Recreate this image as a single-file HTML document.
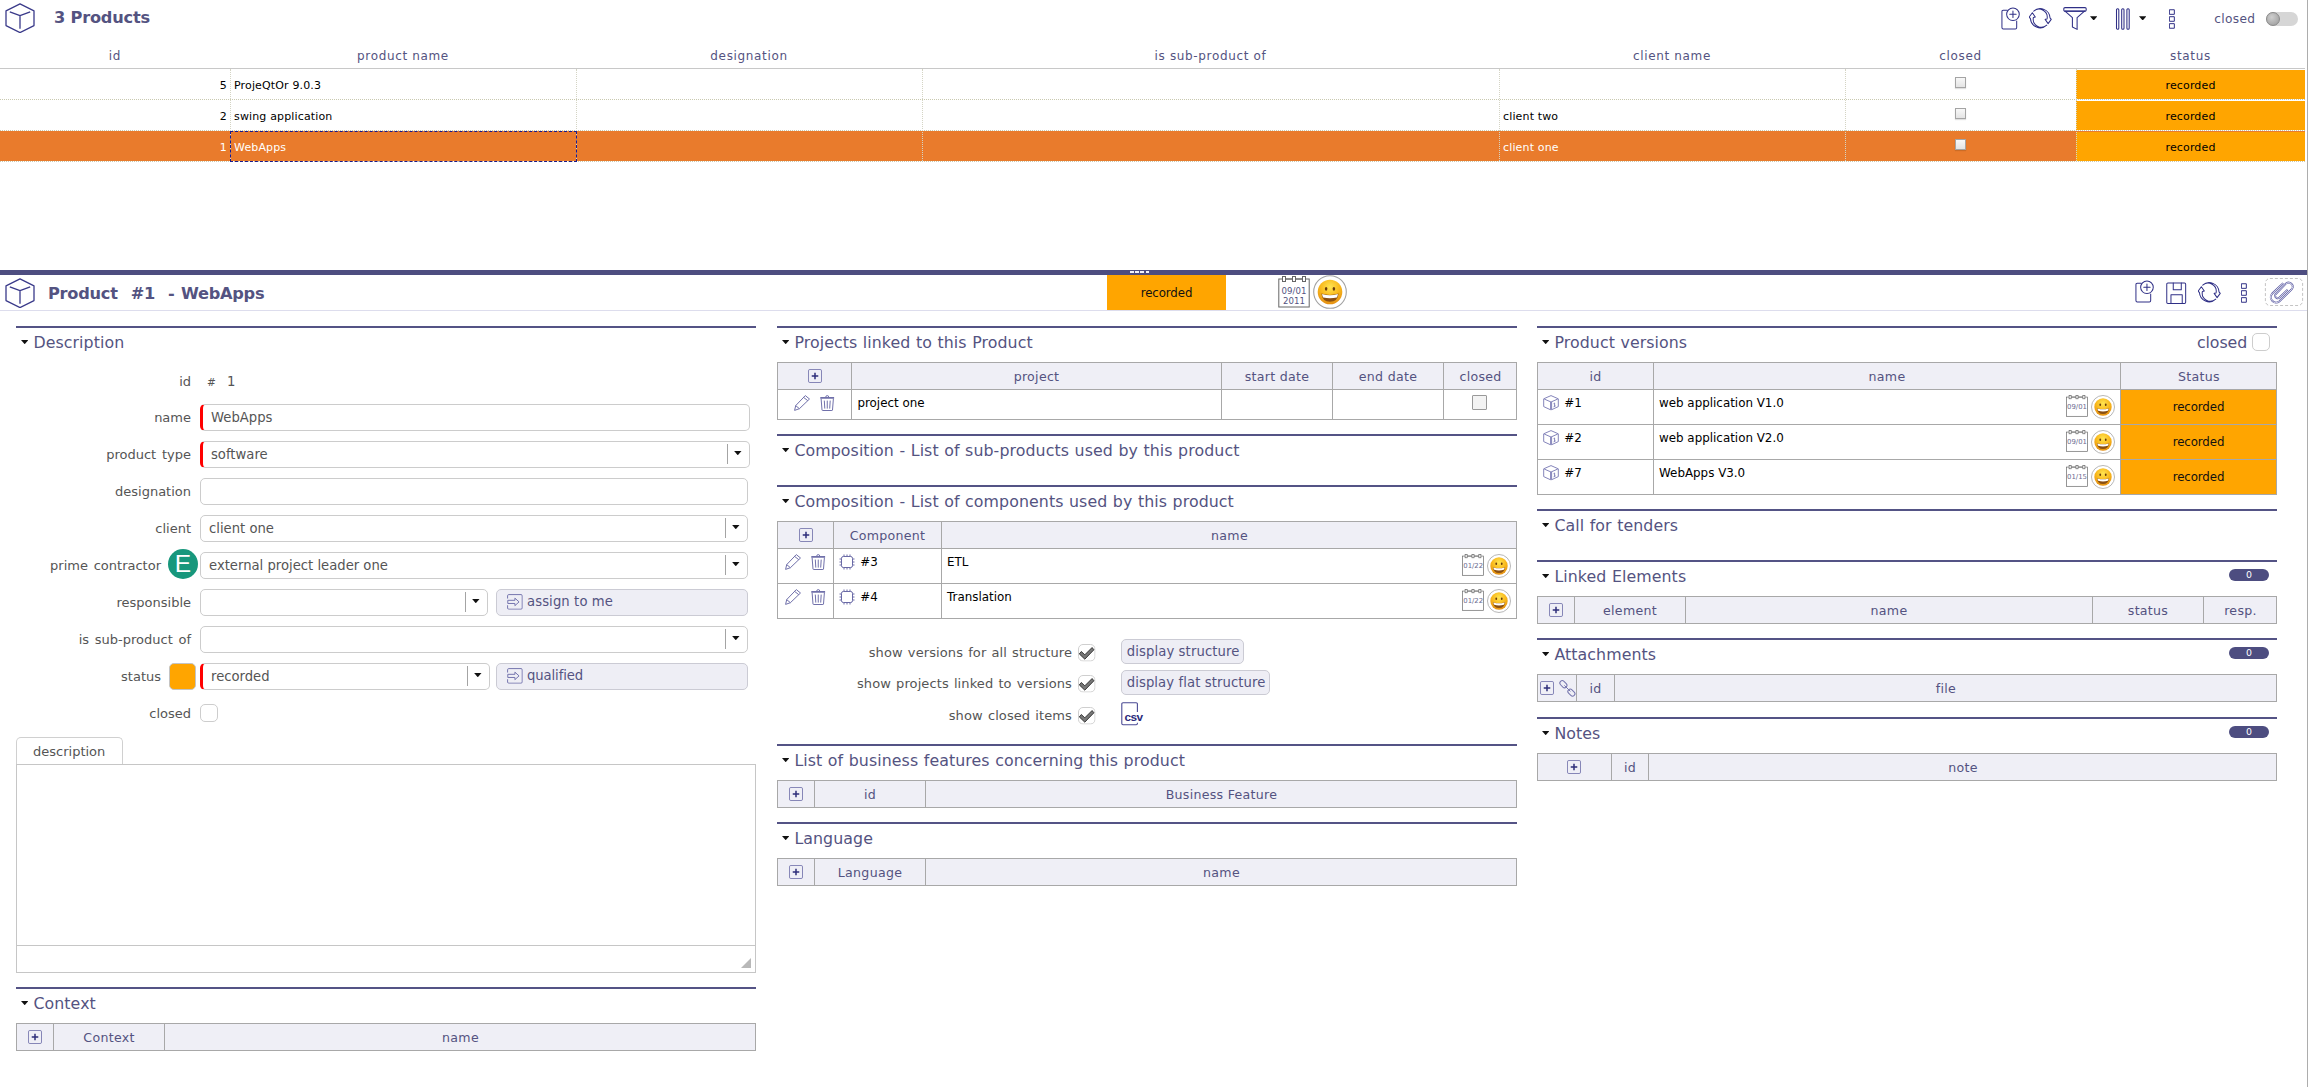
<!DOCTYPE html><html><head><meta charset="utf-8"><title>Products</title><style>
*{box-sizing:border-box;margin:0;padding:0}
html,body{width:2308px;height:1087px;overflow:hidden;background:#fff}
body{position:relative;font-family:"DejaVu Sans","Liberation Sans",sans-serif;font-size:13px;color:#555}
.a{position:absolute;white-space:nowrap}
.t{position:absolute;white-space:nowrap;line-height:1}
.c{text-align:center}
.r{text-align:right}
.gh{color:#545381;font-size:12px;letter-spacing:.65px}
.gc{color:#000;font-size:11px;letter-spacing:.15px}
.sel .gc,.gc.w{color:#fff}
.sec{position:absolute;height:2px;background:#545385}
.st{position:absolute;white-space:nowrap;line-height:1;font-size:15.8px;color:#545381;letter-spacing:.08px;word-spacing:.42px}
.arr{position:absolute;width:7.4px;height:4.2px;background:#111;clip-path:polygon(0 0,100% 0,50% 100%)}
.lb{position:absolute;white-space:nowrap;line-height:1;font-size:13px;color:#555;text-align:right;letter-spacing:0;word-spacing:1.6px}
.in{position:absolute;border:1px solid #ccc;border-radius:5px;background:#fff;height:27px}
.in.req{border-left:3px solid #f00}
.in span{position:absolute;left:8px;top:6px;line-height:1;font-size:13.2px;color:#555;letter-spacing:0}
.in.req span{left:8px}
.in i{position:absolute;right:21px;top:2px;bottom:3px;width:1px;background:#a4a4a4}
.in b{position:absolute;right:7.5px;top:9.1px;width:7.4px;height:4.2px;background:#111;clip-path:polygon(0 0,100% 0,50% 100%)}
.btn{position:absolute;background:#eeeef5;border:1px solid #cbcbd4;border-radius:5px;color:#545381;font-size:13.2px;line-height:1;letter-spacing:.3px}
.tb{position:absolute;border:1px solid #a9a9a9;background:#fff}
.th{position:absolute;background:#efeff6;border-bottom:1px solid #a9a9a9;color:#545381;font-size:12.6px;line-height:1;text-align:center;letter-spacing:.28px}
.vs{position:absolute;width:1px;background:#a9a9a9}
.hs{position:absolute;height:1px;background:#a9a9a9}
.td{position:absolute;white-space:nowrap;line-height:1;font-size:11.9px;color:#000;letter-spacing:0}
.pill{position:absolute;width:40px;height:12px;border-radius:6px;background:#4d4d80;color:#fff;font-size:9.4px;text-align:center;line-height:12.4px}
.cb{position:absolute;border:1px solid #cdcdcd;border-radius:5px;background:#fff}
svg{position:absolute;overflow:visible}
.ic{fill:none;stroke:#2f2f86;stroke-width:1.05;stroke-linejoin:round;stroke-linecap:round}
</style></head><body>
<svg width="0" height="0" style="position:absolute"><defs>
<symbol id="cube" viewBox="0 0 30 30"><g fill="none" stroke="#3a3a8a" stroke-width="1.3" stroke-linejoin="round"><path d="M15 0.8 L29 7.8 V22.6 L15 29.6 L1 22.6 V7.8 Z"/><path d="M4.8 8.8 L15 12.6 L25.2 8.8 M15 12.6 V25.8"/></g></symbol>
<symbol id="plus" viewBox="0 0 15 15"><rect x="0.5" y="0.5" width="14" height="14" rx="1.5" fill="none" stroke="#7a7ab0" stroke-width="1"/><path d="M7.5 4 V11 M4 7.5 H11" stroke="#2e2e7a" stroke-width="1.6" fill="none"/></symbol>
<symbol id="new" viewBox="0 0 20 24"><g class="ic"><path d="M6.5 3.5 H2.2 Q0.8 3.5 0.8 5 V21.5 Q0.8 23 2.2 23 H14.8 Q16.2 23 16.2 21.5 V14.5"/><circle cx="12.3" cy="7.6" r="6.6"/><path d="M12.3 4.3 V10.9 M9 7.6 H15.6"/></g></symbol>
<symbol id="refresh" viewBox="0 0 24 22"><g class="ic" stroke-width="1"><path d="M4.6 3.4 A10.2 10.2 0 0 1 21.7 10.3 L23 11.9 L19.7 16.4 L16.6 11.9 L18.6 11.5 A8.53 8.53 0 0 0 4.6 3.4 Z"/><path d="M4.6 3.4 A10.2 10.2 0 0 1 21.7 10.3 L23 11.9 L19.7 16.4 L16.6 11.9 L18.6 11.5 A8.53 8.53 0 0 0 4.6 3.4 Z" transform="rotate(180 11.45 10.7)"/></g></symbol>
<symbol id="save" viewBox="0 0 22 23"><g class="ic"><path d="M2 0.8 H19.4 Q20.6 0.8 20.6 2 V21 Q20.6 22.2 19.4 22.2 H2 Q0.8 22.2 0.8 21 V2 Q0.8 0.8 2 0.8 Z"/><path d="M7.6 0.8 V7.8 H16 V0.8"/><path d="M5.2 22.2 V13.2 H17 V22.2"/></g></symbol>
<symbol id="dots" viewBox="0 0 7 21"><g class="ic"><rect x="0.8" y="0.8" width="4.8" height="4.8"/><rect x="0.8" y="8.1" width="4.8" height="4.8"/><rect x="0.8" y="15.4" width="4.8" height="4.8"/></g></symbol>
<symbol id="pencil" viewBox="0 0 16 16"><g fill="none" stroke="#7070aa" stroke-width="1" stroke-linejoin="round"><path d="M0.6 15.4 L1.7 10.6 L11.3 0.6 L15.5 4 L5.4 13.7 Z"/><path d="M1.7 10.6 L5.4 13.7 M9.6 2.4 L13.8 5.7"/></g></symbol>
<symbol id="trash" viewBox="0 0 14.5 16"><g fill="none" stroke="#7070aa" stroke-width="1" stroke-linejoin="round"><path d="M0.3 2.9 H14.2" stroke-width="1.7"/><path d="M5.8 2 Q5.8 0.6 7.2 0.6 Q8.7 0.6 8.7 2"/><path d="M1.1 3.6 L2 15 Q2.05 15.5 2.6 15.5 H11.9 Q12.45 15.5 12.5 15 L13.4 3.6"/><path d="M4.3 5.6 L4.8 13.6 M7.25 5.6 V13.6 M10.2 5.6 L9.7 13.6"/></g></symbol>
<symbol id="cal" viewBox="0 0 32 32"><g fill="#fff" stroke="#666" stroke-width="1"><rect x="0.8" y="3" width="30.4" height="28" /><rect x="4.5" y="0.5" width="3" height="5"/><rect x="14.5" y="0.5" width="3" height="5"/><rect x="24.5" y="0.5" width="3" height="5"/></g><path d="M7.5 3 H14.5 M17.5 3 H24.5" stroke="#666" stroke-width="1"/></symbol>
<symbol id="smile" viewBox="0 0 34 34"><defs><radialGradient id="sg" cx="50%" cy="30%" r="70%"><stop offset="0" stop-color="#ffe552"/><stop offset="0.55" stop-color="#f9b91c"/><stop offset="1" stop-color="#e48f12"/></radialGradient></defs><circle cx="17" cy="17" r="16.3" fill="#fff" stroke="#a2a2a2" stroke-width="1.1"/><circle cx="17" cy="17" r="12.3" fill="url(#sg)"/><ellipse cx="13.1" cy="13.8" rx="1.25" ry="1.9" fill="#6a3c0c"/><ellipse cx="20.9" cy="13.8" rx="1.25" ry="1.9" fill="#6a3c0c"/><path d="M8.4 18.6 Q17 21.4 25.6 18.6 Q24.8 26.8 17 26.8 Q9.2 26.8 8.4 18.6 Z" fill="#8a4f12"/><path d="M9.1 19 Q17 21.6 24.9 19 Q24.7 21.4 23.8 22.4 Q17 24 10.2 22.4 Q9.3 21.4 9.1 19 Z" fill="#fff"/></symbol>
<symbol id="chk" viewBox="0 0 17.5 17.5"><rect x="0.5" y="0.5" width="16.5" height="16.5" rx="4.5" fill="#fff" stroke="#cfcfcf"/><path d="M1.3 9.9 L3.3 7.5 L6.8 10.8 L14.1 3.5 L15.9 5.8 L6.8 15.2 Z" fill="#777" stroke="#2e2e2e" stroke-width="0.9" stroke-linejoin="round"/></symbol>
<symbol id="comp" viewBox="0 0 16 16"><g fill="none" stroke="#6a6aa6" stroke-width="1"><rect x="2.5" y="2.5" width="11" height="11" rx="1.8"/><path d="M5 0.5 V2.5 M8 0.5 V2.5 M11 0.5 V2.5 M5 13.5 V15.5 M8 13.5 V15.5 M11 13.5 V15.5 M0.5 5 H2.5 M0.5 8 H2.5 M0.5 11 H2.5 M13.5 5 H15.5 M13.5 8 H15.5 M13.5 11 H15.5"/></g></symbol>
<symbol id="pv" viewBox="0 0 16 15.5"><g fill="none" stroke="#8484ba" stroke-width="1" stroke-linejoin="round"><path d="M8 0.6 L15.3 3.8 V11.6 L8 15 L0.7 11.6 V3.8 Z"/><path d="M1.2 4 L8 7 L14.8 4 M7.6 7 V14.6 M8.6 7 V14.6"/><path d="M10.6 8.6 L11.6 8 V11.4 M10.6 11.8 L12.6 10.9"/></g></symbol>
<symbol id="goto" viewBox="0 0 16 16"><g fill="none" stroke="#7474ae" stroke-width="1" stroke-linejoin="round"><path d="M0.6 4.6 V1.8 Q0.6 0.6 1.8 0.6 H14.2 Q15.4 0.6 15.4 1.8 V14.2 Q15.4 15.4 14.2 15.4 H1.8 Q0.6 15.4 0.6 14.2 V11.4"/><path d="M0.8 6.4 H8 V4.2 L12.2 8 L8 11.8 V9.6 H0.8 Z"/></g></symbol>
</defs></svg>
<svg style="left:5px;top:3px" width="30" height="30"><use href="#cube" width="30" height="30"/></svg>
<div class="t" style="left:54px;top:10px;font-size:16.2px;font-weight:bold;color:#545381;letter-spacing:-.2px">3 Products</div>
<svg style="left:2000.5px;top:6.5px" width="19.5" height="23"><use href="#new" width="19.5" height="23"/></svg>
<svg style="left:2029px;top:7.5px" width="23.5" height="21"><use href="#refresh" width="23.5" height="21"/></svg>
<svg style="left:2062.5px;top:7px" width="24" height="24" viewBox="0 0 24 24"><g class="ic"><rect x="0.8" y="0.6" width="22.4" height="3.7" rx="1.2"/><path d="M2 4.1 H22" stroke-width="1.3"/><path d="M2.3 4.4 L9.4 10.6 V20 L14.1 22.4 V10.6 L21.5 4.2"/></g></svg>
<div class="arr" style="left:2090px;top:16.2px"></div>
<svg style="left:2116px;top:8px" width="15" height="22" viewBox="0 0 15 22"><g class="ic" stroke-width="0.9"><rect x="0.5" y="0.8" width="2.3" height="20.4" rx="1"/><rect x="5.7" y="0.8" width="2.3" height="20.4" rx="1"/><rect x="10.9" y="0.8" width="2.3" height="20.4" rx="1"/></g></svg>
<div class="arr" style="left:2139px;top:16.2px"></div>
<svg style="left:2168.5px;top:9px" width="6.67" height="20"><use href="#dots" width="6.67" height="20"/></svg>
<div class="t" style="left:2214.3px;top:12.6px;font-size:12.2px;color:#545381;letter-spacing:.3px">closed</div>
<div class="a" style="left:2266px;top:12px;width:32px;height:14px;border-radius:7px;background:#d6d6d6"></div>
<div class="a" style="left:2266px;top:12px;width:14px;height:14px;border-radius:7px;background:radial-gradient(circle at 40% 35%,#cfcfcf,#999);border:1px solid #8a8a8a"></div>
<div class="t gh c" style="left:0px;top:50px;width:230px;">id</div>
<div class="t gh c" style="left:230px;top:50px;width:346px;">product name</div>
<div class="t gh c" style="left:576px;top:50px;width:346px;">designation</div>
<div class="t gh c" style="left:922px;top:50px;width:577px;">is sub-product of</div>
<div class="t gh c" style="left:1499px;top:50px;width:346px;">client name</div>
<div class="t gh c" style="left:1845px;top:50px;width:231px;">closed</div>
<div class="t gh c" style="left:2076px;top:50px;width:229px;">status</div>
<div class="a" style="left:0;top:68px;width:2305px;height:1px;background:#c8c8c8"></div>
<div class="t gc r" style="left:0px;top:79.5px;width:227px;">5</div>
<div class="t gc" style="left:234px;top:79.5px;">ProjeQtOr 9.0.3</div>
<div class="a" style="left:0;top:99px;width:2305px;height:0;border-top:1px dotted #c9c9b0"></div>
<div class="a" style="left:1955px;top:77px;width:11px;height:11px;border:1px solid #a4a4a4;background:linear-gradient(#f8f8f8,#e4e4e4);box-shadow:0 1px 1px rgba(0,0,0,.12)"></div>
<div class="a" style="left:2076px;top:70px;width:229.3px;height:28.7px;background:#ffa500"></div>
<div class="t gc c" style="left:2076px;top:79.5px;width:229px;">recorded</div>
<div class="t gc r" style="left:0px;top:110.5px;width:227px;">2</div>
<div class="t gc" style="left:234px;top:110.5px;">swing application</div>
<div class="t gc" style="left:1503px;top:110.5px;">client two</div>
<div class="a" style="left:0;top:130px;width:2305px;height:0;border-top:1px dotted #c9c9b0"></div>
<div class="a" style="left:1955px;top:108px;width:11px;height:11px;border:1px solid #a4a4a4;background:linear-gradient(#f8f8f8,#e4e4e4);box-shadow:0 1px 1px rgba(0,0,0,.12)"></div>
<div class="a" style="left:2076px;top:101px;width:229.3px;height:28.7px;background:#ffa500"></div>
<div class="t gc c" style="left:2076px;top:110.5px;width:229px;">recorded</div>
<div class="a" style="left:0;top:130.7px;width:2305.3px;height:30.6px;background:#e97b2c"></div>
<div class="t gc r w" style="left:0px;top:141.5px;width:227px;">1</div>
<div class="t gc w" style="left:234px;top:141.5px;">WebApps</div>
<div class="t gc w" style="left:1503px;top:141.5px;">client one</div>
<div class="a" style="left:0;top:161px;width:2305px;height:0;border-top:1px dotted #c9c9b0"></div>
<div class="a" style="left:1955px;top:139px;width:11px;height:11px;border:1px solid #a4a4a4;background:linear-gradient(#f8f8f8,#e4e4e4);box-shadow:0 1px 1px rgba(0,0,0,.12)"></div>
<div class="a" style="left:2076px;top:132px;width:229.3px;height:28.7px;background:#ffa500"></div>
<div class="t gc c" style="left:2076px;top:141.5px;width:229px;">recorded</div>
<div class="a" style="left:230px;top:69px;width:0;height:92px;border-left:1px dotted #d4d4c4"></div>
<div class="a" style="left:576px;top:69px;width:0;height:92px;border-left:1px dotted #d4d4c4"></div>
<div class="a" style="left:922px;top:69px;width:0;height:92px;border-left:1px dotted #d4d4c4"></div>
<div class="a" style="left:1499px;top:69px;width:0;height:92px;border-left:1px dotted #d4d4c4"></div>
<div class="a" style="left:1845px;top:69px;width:0;height:92px;border-left:1px dotted #d4d4c4"></div>
<div class="a" style="left:2076px;top:69px;width:0;height:92px;border-left:1px dotted #d4d4c4"></div>
<div class="a" style="left:230px;top:131px;width:347px;height:30.5px;border:1px dashed #1a1a8c"></div>
<div class="a" style="left:2306.7px;top:0;width:1.3px;height:1087px;background:#adadad"></div>
<div class="a" style="left:0;top:270px;width:2306.8px;height:5px;background:#4d4d80"></div>
<div class="a" style="left:1130px;top:271.2px;width:20px;height:1.7px;background:repeating-linear-gradient(90deg,#f4f4fa 0 3.8px,#4d4d80 3.8px 5.2px)"></div>
<div class="a" style="left:0;top:310px;width:2306.8px;height:1px;background:#dddded"></div>
<svg style="left:5px;top:278px" width="30" height="30"><use href="#cube" width="30" height="30"/></svg>
<div class="t" style="left:48px;top:286px;font-size:16.2px;font-weight:bold;color:#545381;letter-spacing:-.25px;word-spacing:1.1px">Product&nbsp; #1&nbsp; - WebApps</div>
<div class="a" style="left:1107px;top:275px;width:119px;height:35px;background:#ffa500"></div>
<div class="t c" style="left:1107px;top:288px;width:119px;font-size:11.8px;color:#111;letter-spacing:-.1px">recorded</div>
<svg style="left:1278px;top:275.5px" width="32" height="32"><use href="#cal" width="32" height="32"/></svg>
<div class="t c" style="left:1278px;top:286.5px;width:32px;font-size:8.6px;color:#545381">09/01</div>
<div class="t c" style="left:1278px;top:296.5px;width:32px;font-size:8.6px;color:#545381">2011</div>
<svg style="left:1313.2px;top:274.6px" width="34" height="34"><use href="#smile" width="34" height="34"/></svg>
<svg style="left:2134.5px;top:280px" width="19.5" height="23"><use href="#new" width="19.5" height="23"/></svg>
<svg style="left:2165.7px;top:281.6px" width="21" height="22.4"><use href="#save" width="21" height="22.4"/></svg>
<svg style="left:2198px;top:281.5px" width="23.5" height="21"><use href="#refresh" width="23.5" height="21"/></svg>
<svg style="left:2240.5px;top:283px" width="6.67" height="20"><use href="#dots" width="6.67" height="20"/></svg>
<svg style="left:2262px;top:274px" width="44" height="36" viewBox="0 0 44 36"><rect x="3.4" y="4.5" width="37.2" height="27" rx="4.5" fill="none" stroke="#bdbdbd" stroke-width="0.9" stroke-dasharray="3 2"/><path d="M21.2 9.1 L10.26 19.54 A5.3 5.3 0 0 0 17.22 27.48 L29.8 15.23 A4.12 4.12 0 0 0 23.84 9.6 L13.25 20.53 A2.7 2.7 0 0 0 17.88 23.18 L25.66 15.56" fill="none" stroke="#5656a0" stroke-width="1.9"/><path d="M21.2 9.1 L10.26 19.54 A5.3 5.3 0 0 0 17.22 27.48 L29.8 15.23 A4.12 4.12 0 0 0 23.84 9.6 L13.25 20.53 A2.7 2.7 0 0 0 17.88 23.18 L25.66 15.56" fill="none" stroke="#fff" stroke-width="0.8"/></svg>
<div class="sec" style="left:16px;top:326px;width:740px"></div>
<div class="arr" style="left:21px;top:340px"></div>
<div class="st" style="left:33.4px;top:334.8px;">Description</div>
<div class="lb" style="left:0px;top:374.5px;width:191px;">id</div>
<div class="t" style="left:207px;top:376.5px;font-size:10.5px;color:#555">#</div>
<div class="t" style="left:227px;top:374.5px;font-size:13.2px;color:#555">1</div>
<div class="lb" style="left:0px;top:411px;width:191px;">name</div>
<div class="in req" style="left:200px;top:404px;width:550px"><span>WebApps</span></div>
<div class="lb" style="left:0px;top:448px;width:191px;">product type</div>
<div class="in req" style="left:200px;top:441px;width:550px"><span>software</span><i></i><b></b></div>
<div class="lb" style="left:0px;top:485px;width:191px;">designation</div>
<div class="in" style="left:200px;top:478px;width:548px"></div>
<div class="lb" style="left:0px;top:522px;width:191px;">client</div>
<div class="in" style="left:200px;top:515px;width:548px"><span>client one</span><i></i><b></b></div>
<div class="lb" style="left:0px;top:559px;width:161px;">prime contractor</div>
<div class="in" style="left:200px;top:552px;width:548px"><span>external project leader one</span><i></i><b></b></div>
<div class="a" style="left:168px;top:549px;width:30px;height:30px;border-radius:15px;background:#17977c;color:#fff;font-size:24.5px;line-height:30px;text-align:center;font-family:'Liberation Sans',sans-serif">E</div>
<div class="lb" style="left:0px;top:596px;width:191px;">responsible</div>
<div class="in" style="left:200px;top:589px;width:288px"><i></i><b></b></div>
<div class="btn" style="left:496px;top:589px;width:252px;height:27px"></div>
<svg style="left:507px;top:594px" width="15.8" height="15.8"><use href="#goto" width="15.8" height="15.8"/></svg>
<div class="t" style="left:527px;top:595px;font-size:13.2px;color:#545381;letter-spacing:.1px">assign to me</div>
<div class="lb" style="left:0px;top:633px;width:191px;">is sub-product of</div>
<div class="in" style="left:200px;top:626px;width:548px"><i></i><b></b></div>
<div class="lb" style="left:0px;top:670px;width:161px;">status</div>
<div class="a" style="left:169px;top:663px;width:27px;height:27px;border-radius:5px;background:#ffa500;border:1px solid #c4c4c4"></div>
<div class="in req" style="left:200px;top:663px;width:290px"><span>recorded</span><i></i><b></b></div>
<div class="btn" style="left:496px;top:663px;width:252px;height:27px"></div>
<svg style="left:507px;top:668px" width="15.8" height="15.8"><use href="#goto" width="15.8" height="15.8"/></svg>
<div class="t" style="left:527px;top:669px;font-size:13.2px;color:#545381;letter-spacing:-.1px">qualified</div>
<div class="lb" style="left:0px;top:707px;width:191px;">closed</div>
<div class="cb" style="left:200px;top:703.8px;width:18px;height:18px"></div>
<div class="a" style="left:16px;top:737px;width:107px;height:28px;border:1px solid #d0d0d0;border-bottom:0;border-radius:5px 5px 0 0;background:#fff"></div>
<div class="a" style="left:16px;top:764px;width:740px;height:209px;border:1px solid #c6c6c6;background:#fff"></div>
<div class="a" style="left:16px;top:945px;width:740px;height:1px;background:#c6c6c6"></div>
<div class="t" style="left:33px;top:744.8px;font-size:13px;color:#555;letter-spacing:0">description</div>
<div class="a" style="left:741px;top:958px;width:0;height:0;border-left:10px solid transparent;border-bottom:10px solid #b8b8b8"></div>
<div class="sec" style="left:16px;top:987px;width:740px"></div>
<div class="arr" style="left:21px;top:1001px"></div>
<div class="st" style="left:33.4px;top:995.8px;">Context</div>
<div class="a" style="left:16px;top:1023px;width:740px;height:28px;background:#fff"></div>
<div class="a" style="left:16px;top:1023px;width:740px;height:28px;background:#efeff6"></div>
<div class="t th" style="left:53px;top:1031.6px;width:112px;background:none;border:0">Context</div>
<div class="t th" style="left:164px;top:1031.6px;width:593px;background:none;border:0">name</div>
<div class="a" style="left:16px;top:1023px;width:740px;height:28px;border:1px solid #a8a8a8"></div>
<div class="vs" style="left:53px;top:1023px;height:28px;background:#a8a8a8"></div>
<div class="vs" style="left:164px;top:1023px;height:28px;background:#a8a8a8"></div>
<svg style="left:28px;top:1030px" width="14" height="14"><use href="#plus" width="14" height="14"/></svg>
<div class="sec" style="left:777px;top:326px;width:740px"></div>
<div class="arr" style="left:782px;top:340px"></div>
<div class="st" style="left:794.4px;top:334.8px;">Projects linked to this Product</div>
<div class="a" style="left:777px;top:362px;width:740px;height:58px;background:#fff"></div>
<div class="a" style="left:777px;top:362px;width:740px;height:28px;background:#efeff6"></div>
<div class="t th" style="left:851px;top:370.6px;width:371px;background:none;border:0">project</div>
<div class="t th" style="left:1221px;top:370.6px;width:112px;background:none;border:0">start date</div>
<div class="t th" style="left:1332px;top:370.6px;width:112px;background:none;border:0">end date</div>
<div class="t th" style="left:1443px;top:370.6px;width:75px;background:none;border:0">closed</div>
<div class="a" style="left:777px;top:362px;width:740px;height:58px;border:1px solid #a8a8a8"></div>
<div class="vs" style="left:851px;top:362px;height:58px;background:#a8a8a8"></div>
<div class="vs" style="left:1221px;top:362px;height:58px;background:#a8a8a8"></div>
<div class="vs" style="left:1332px;top:362px;height:58px;background:#a8a8a8"></div>
<div class="vs" style="left:1443px;top:362px;height:58px;background:#a8a8a8"></div>
<div class="hs" style="left:777px;top:389px;width:740px;background:#a8a8a8"></div>
<svg style="left:808px;top:369px" width="14" height="14"><use href="#plus" width="14" height="14"/></svg>
<svg style="left:794px;top:395px" width="16" height="16"><use href="#pencil" width="16" height="16"/></svg>
<svg style="left:820px;top:395px" width="14.5" height="16"><use href="#trash" width="14.5" height="16"/></svg>
<div class="td" style="left:857.4px;top:398px;">project one</div>
<div class="a" style="left:1472px;top:395px;width:15px;height:15px;border:1px solid #999;background:#f3f3f3;border-radius:1px"></div>
<div class="sec" style="left:777px;top:434px;width:740px"></div>
<div class="arr" style="left:782px;top:448px"></div>
<div class="st" style="left:794.4px;top:442.8px;">Composition - List of sub-products used by this product</div>
<div class="sec" style="left:777px;top:485px;width:740px"></div>
<div class="arr" style="left:782px;top:499px"></div>
<div class="st" style="left:794.4px;top:493.8px;">Composition - List of components used by this product</div>
<div class="a" style="left:777px;top:521px;width:740px;height:98px;background:#fff"></div>
<div class="a" style="left:777px;top:521px;width:740px;height:28px;background:#efeff6"></div>
<div class="t th" style="left:833px;top:529.6px;width:109px;background:none;border:0">Component</div>
<div class="t th" style="left:941px;top:529.6px;width:577px;background:none;border:0">name</div>
<div class="a" style="left:777px;top:521px;width:740px;height:98px;border:1px solid #a8a8a8"></div>
<div class="vs" style="left:833px;top:521px;height:98px;background:#a8a8a8"></div>
<div class="vs" style="left:941px;top:521px;height:98px;background:#a8a8a8"></div>
<div class="hs" style="left:777px;top:548px;width:740px;background:#a8a8a8"></div>
<div class="hs" style="left:777px;top:583px;width:740px;background:#a8a8a8"></div>
<svg style="left:799px;top:528px" width="14" height="14"><use href="#plus" width="14" height="14"/></svg>
<svg style="left:785.2px;top:554px" width="16" height="16"><use href="#pencil" width="16" height="16"/></svg>
<svg style="left:811.1px;top:553.8px" width="14.5" height="16"><use href="#trash" width="14.5" height="16"/></svg>
<svg style="left:839px;top:554px" width="16" height="16"><use href="#comp" width="16" height="16"/></svg>
<div class="td" style="left:860.2px;top:556.8px;">#3</div>
<div class="td" style="left:947px;top:556.8px;">ETL</div>
<svg style="left:1462.2px;top:554.1px" width="22" height="22"><use href="#cal" width="22" height="22"/></svg>
<div class="t c" style="left:1462.2px;top:563.3px;width:22px;font-size:6.9px;color:#6c6c90">01/22</div>
<svg style="left:1487.2px;top:553.9px" width="24" height="24"><use href="#smile" width="24" height="24"/></svg>
<svg style="left:785.2px;top:589px" width="16" height="16"><use href="#pencil" width="16" height="16"/></svg>
<svg style="left:811.1px;top:588.8px" width="14.5" height="16"><use href="#trash" width="14.5" height="16"/></svg>
<svg style="left:839px;top:589px" width="16" height="16"><use href="#comp" width="16" height="16"/></svg>
<div class="td" style="left:860.2px;top:591.8px;">#4</div>
<div class="td" style="left:947px;top:591.8px;">Translation</div>
<svg style="left:1462.2px;top:589.1px" width="22" height="22"><use href="#cal" width="22" height="22"/></svg>
<div class="t c" style="left:1462.2px;top:598.3px;width:22px;font-size:6.9px;color:#6c6c90">01/22</div>
<svg style="left:1487.2px;top:588.9px" width="24" height="24"><use href="#smile" width="24" height="24"/></svg>
<div class="lb" style="left:700px;top:646.4px;width:372px;letter-spacing:.1px;word-spacing:.9px">show versions for all structure</div>
<svg style="left:1078px;top:644px" width="17.5" height="17.5"><use href="#chk" width="17.5" height="17.5"/></svg>
<div class="lb" style="left:700px;top:677.4px;width:372px;letter-spacing:.1px;word-spacing:.9px">show projects linked to versions</div>
<svg style="left:1078px;top:675px" width="17.5" height="17.5"><use href="#chk" width="17.5" height="17.5"/></svg>
<div class="lb" style="left:700px;top:709.4px;width:372px;letter-spacing:.1px;word-spacing:.9px">show closed items</div>
<svg style="left:1078px;top:707px" width="17.5" height="17.5"><use href="#chk" width="17.5" height="17.5"/></svg>
<div class="btn" style="left:1121px;top:638.5px;width:123px;height:25px"></div>
<div class="t c" style="left:1121.6px;top:645.3px;width:123px;font-size:13.2px;color:#545381;letter-spacing:.12px">display structure</div>
<div class="btn" style="left:1121px;top:669.5px;width:149px;height:25px"></div>
<div class="t c" style="left:1121.6px;top:676.3px;width:149px;font-size:13.2px;color:#545381;letter-spacing:.1px">display flat structure</div>
<svg style="left:1121px;top:702px" width="23" height="24" viewBox="0 0 23 24"><path d="M16.4 10 V2 Q16.4 0.8 15.2 0.8 H2 Q0.8 0.8 0.8 2 V21.6 Q0.8 22.8 2 22.8 H15.2 Q16.4 22.8 16.4 21.6 V20.8" fill="none" stroke="#4a4a94" stroke-width="1.1"/><text x="3.6" y="19.3" font-family="Liberation Sans,sans-serif" font-size="11.8" font-weight="bold" fill="#2a2a7c" letter-spacing="-.6">csv</text></svg>
<div class="sec" style="left:777px;top:744px;width:740px"></div>
<div class="arr" style="left:782px;top:758px"></div>
<div class="st" style="left:794.4px;top:752.8px;">List of business features concerning this product</div>
<div class="a" style="left:777px;top:780px;width:740px;height:28px;background:#fff"></div>
<div class="a" style="left:777px;top:780px;width:740px;height:28px;background:#efeff6"></div>
<div class="t th" style="left:814px;top:788.6px;width:112px;background:none;border:0">id</div>
<div class="t th" style="left:925px;top:788.6px;width:593px;background:none;border:0">Business Feature</div>
<div class="a" style="left:777px;top:780px;width:740px;height:28px;border:1px solid #a8a8a8"></div>
<div class="vs" style="left:814px;top:780px;height:28px;background:#a8a8a8"></div>
<div class="vs" style="left:925px;top:780px;height:28px;background:#a8a8a8"></div>
<svg style="left:789px;top:787px" width="14" height="14"><use href="#plus" width="14" height="14"/></svg>
<div class="sec" style="left:777px;top:822px;width:740px"></div>
<div class="arr" style="left:782px;top:836px"></div>
<div class="st" style="left:794.4px;top:830.8px;">Language</div>
<div class="a" style="left:777px;top:858px;width:740px;height:28px;background:#fff"></div>
<div class="a" style="left:777px;top:858px;width:740px;height:28px;background:#efeff6"></div>
<div class="t th" style="left:814px;top:866.6px;width:112px;background:none;border:0">Language</div>
<div class="t th" style="left:925px;top:866.6px;width:593px;background:none;border:0">name</div>
<div class="a" style="left:777px;top:858px;width:740px;height:28px;border:1px solid #a8a8a8"></div>
<div class="vs" style="left:814px;top:858px;height:28px;background:#a8a8a8"></div>
<div class="vs" style="left:925px;top:858px;height:28px;background:#a8a8a8"></div>
<svg style="left:789px;top:865px" width="14" height="14"><use href="#plus" width="14" height="14"/></svg>
<div class="sec" style="left:1537px;top:326px;width:740px"></div>
<div class="arr" style="left:1542px;top:340px"></div>
<div class="st" style="left:1554.4px;top:334.8px;">Product versions</div>
<div class="st" style="left:2197px;top:334.8px;letter-spacing:-.1px">closed</div>
<div class="cb" style="left:2252px;top:333px;width:18px;height:18px"></div>
<div class="a" style="left:1537px;top:362px;width:740px;height:133px;background:#fff"></div>
<div class="a" style="left:1537px;top:362px;width:740px;height:28px;background:#efeff6"></div>
<div class="t th" style="left:1537px;top:370.6px;width:117px;background:none;border:0">id</div>
<div class="t th" style="left:1653px;top:370.6px;width:468px;background:none;border:0">name</div>
<div class="t th" style="left:2120px;top:370.6px;width:158px;background:none;border:0">Status</div>
<div class="a" style="left:1537px;top:362px;width:740px;height:133px;border:1px solid #a8a8a8"></div>
<div class="vs" style="left:1653px;top:362px;height:133px;background:#a8a8a8"></div>
<div class="vs" style="left:2120px;top:362px;height:133px;background:#a8a8a8"></div>
<div class="hs" style="left:1537px;top:389px;width:740px;background:#a8a8a8"></div>
<div class="hs" style="left:1537px;top:424px;width:740px;background:#a8a8a8"></div>
<div class="hs" style="left:1537px;top:459px;width:740px;background:#a8a8a8"></div>
<svg style="left:1543px;top:395.4px" width="16" height="15.5"><use href="#pv" width="16" height="15.5"/></svg>
<div class="td" style="left:1564.3px;top:398px;">#1</div>
<div class="td" style="left:1659px;top:398px;">web application V1.0</div>
<svg style="left:2066px;top:395.1px" width="22" height="22"><use href="#cal" width="22" height="22"/></svg>
<div class="t c" style="left:2066px;top:404.3px;width:22px;font-size:6.9px;color:#6c6c90">09/01</div>
<svg style="left:2091px;top:394.9px" width="24" height="24"><use href="#smile" width="24" height="24"/></svg>
<div class="a" style="left:2121px;top:390px;width:155px;height:34px;background:#ffa500"></div>
<div class="t c" style="left:2121px;top:402.3px;width:155px;font-size:11.8px;color:#111;letter-spacing:-.1px">recorded</div>
<svg style="left:1543px;top:430.4px" width="16" height="15.5"><use href="#pv" width="16" height="15.5"/></svg>
<div class="td" style="left:1564.3px;top:433px;">#2</div>
<div class="td" style="left:1659px;top:433px;">web application V2.0</div>
<svg style="left:2066px;top:430.1px" width="22" height="22"><use href="#cal" width="22" height="22"/></svg>
<div class="t c" style="left:2066px;top:439.3px;width:22px;font-size:6.9px;color:#6c6c90">09/01</div>
<svg style="left:2091px;top:429.9px" width="24" height="24"><use href="#smile" width="24" height="24"/></svg>
<div class="a" style="left:2121px;top:425px;width:155px;height:34px;background:#ffa500"></div>
<div class="t c" style="left:2121px;top:437.3px;width:155px;font-size:11.8px;color:#111;letter-spacing:-.1px">recorded</div>
<svg style="left:1543px;top:465.4px" width="16" height="15.5"><use href="#pv" width="16" height="15.5"/></svg>
<div class="td" style="left:1564.3px;top:468px;">#7</div>
<div class="td" style="left:1659px;top:468px;">WebApps V3.0</div>
<svg style="left:2066px;top:465.1px" width="22" height="22"><use href="#cal" width="22" height="22"/></svg>
<div class="t c" style="left:2066px;top:474.3px;width:22px;font-size:6.9px;color:#6c6c90">01/15</div>
<svg style="left:2091px;top:464.9px" width="24" height="24"><use href="#smile" width="24" height="24"/></svg>
<div class="a" style="left:2121px;top:460px;width:155px;height:34px;background:#ffa500"></div>
<div class="t c" style="left:2121px;top:472.3px;width:155px;font-size:11.8px;color:#111;letter-spacing:-.1px">recorded</div>
<div class="sec" style="left:1537px;top:509px;width:740px"></div>
<div class="arr" style="left:1542px;top:523px"></div>
<div class="st" style="left:1554.4px;top:517.8px;">Call for tenders</div>
<div class="sec" style="left:1537px;top:560px;width:740px"></div>
<div class="arr" style="left:1542px;top:574px"></div>
<div class="st" style="left:1554.4px;top:568.8px;">Linked Elements</div>
<div class="pill" style="left:2229px;top:569px">0</div>
<div class="a" style="left:1537px;top:596px;width:740px;height:28px;background:#fff"></div>
<div class="a" style="left:1537px;top:596px;width:740px;height:28px;background:#efeff6"></div>
<div class="t th" style="left:1574px;top:604.6px;width:112px;background:none;border:0">element</div>
<div class="t th" style="left:1685px;top:604.6px;width:408px;background:none;border:0">name</div>
<div class="t th" style="left:2092px;top:604.6px;width:112px;background:none;border:0">status</div>
<div class="t th" style="left:2203px;top:604.6px;width:75px;background:none;border:0">resp.</div>
<div class="a" style="left:1537px;top:596px;width:740px;height:28px;border:1px solid #a8a8a8"></div>
<div class="vs" style="left:1574px;top:596px;height:28px;background:#a8a8a8"></div>
<div class="vs" style="left:1685px;top:596px;height:28px;background:#a8a8a8"></div>
<div class="vs" style="left:2092px;top:596px;height:28px;background:#a8a8a8"></div>
<div class="vs" style="left:2203px;top:596px;height:28px;background:#a8a8a8"></div>
<svg style="left:1549px;top:603px" width="14" height="14"><use href="#plus" width="14" height="14"/></svg>
<div class="sec" style="left:1537px;top:638px;width:740px"></div>
<div class="arr" style="left:1542px;top:652px"></div>
<div class="st" style="left:1554.4px;top:646.8px;">Attachments</div>
<div class="pill" style="left:2229px;top:647px">0</div>
<div class="a" style="left:1537px;top:674px;width:740px;height:28px;background:#fff"></div>
<div class="a" style="left:1537px;top:674px;width:740px;height:28px;background:#efeff6"></div>
<div class="t th" style="left:1576px;top:682.6px;width:39px;background:none;border:0">id</div>
<div class="t th" style="left:1614px;top:682.6px;width:664px;background:none;border:0">file</div>
<div class="a" style="left:1537px;top:674px;width:740px;height:28px;border:1px solid #a8a8a8"></div>
<div class="vs" style="left:1576px;top:674px;height:28px;background:#a8a8a8"></div>
<div class="vs" style="left:1614px;top:674px;height:28px;background:#a8a8a8"></div>
<svg style="left:1540px;top:681px" width="14" height="14"><use href="#plus" width="14" height="14"/></svg>
<svg style="left:1558.5px;top:679.5px" width="17" height="17" viewBox="0 0 17 17"><g fill="none" stroke="#7676ae" stroke-width="1"><rect x="-2.4" y="-4" width="4.8" height="8" rx="2.4" transform="translate(4.4 4.2) rotate(-45)"/><rect x="-2.4" y="-4" width="4.8" height="8" rx="2.4" transform="translate(12.4 12.6) rotate(-45)"/><path d="M5.4 5.4 L11.4 11.4"/></g></svg>
<div class="sec" style="left:1537px;top:717px;width:740px"></div>
<div class="arr" style="left:1542px;top:731px"></div>
<div class="st" style="left:1554.4px;top:725.8px;">Notes</div>
<div class="pill" style="left:2229px;top:726px">0</div>
<div class="a" style="left:1537px;top:753px;width:740px;height:28px;background:#fff"></div>
<div class="a" style="left:1537px;top:753px;width:740px;height:28px;background:#efeff6"></div>
<div class="t th" style="left:1611px;top:761.6px;width:38px;background:none;border:0">id</div>
<div class="t th" style="left:1648px;top:761.6px;width:630px;background:none;border:0">note</div>
<div class="a" style="left:1537px;top:753px;width:740px;height:28px;border:1px solid #a8a8a8"></div>
<div class="vs" style="left:1611px;top:753px;height:28px;background:#a8a8a8"></div>
<div class="vs" style="left:1648px;top:753px;height:28px;background:#a8a8a8"></div>
<svg style="left:1567px;top:760px" width="14" height="14"><use href="#plus" width="14" height="14"/></svg>
</body></html>
